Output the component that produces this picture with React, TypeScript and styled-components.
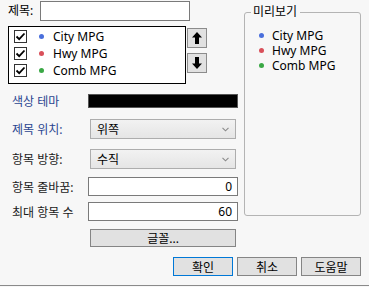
import React from 'react';
import styled, { createGlobalStyle } from 'styled-components';

const GlobalStyle = createGlobalStyle`
  body {
    margin: 0;
    background: #f7f7f7;
    font-family: 'Noto Sans', 'Noto Sans CJK KR', sans-serif;
    font-size: 12px;
    color: #000;
  }
`;

const SERIES = [
  { name: 'City MPG', color: '#4a6fdc' },
  { name: 'Hwy MPG', color: '#d9505a' },
  { name: 'Comb MPG', color: '#3aa845' },
];

function CheckMark() {
  return (
    <svg width="11" height="11" viewBox="0 0 11 11">
      <path d="M1.5 5.5 L4.2 8.2 L9.5 2.5" fill="none" stroke="#000" strokeWidth="1.8" />
    </svg>
  );
}

function Arrow({ down }: { down?: boolean }) {
  return (
    <svg width="10" height="12" viewBox="0 0 10 12" style={down ? { transform: 'rotate(180deg)' } : undefined}>
      <path d="M5 0 L10 5.5 L7 5.5 L7 12 L3 12 L3 5.5 L0 5.5 Z" fill="#000" />
    </svg>
  );
}

function Chevron() {
  return (
    <svg width="7" height="5" viewBox="0 0 7 5">
      <path d="M0.5 0.8 L3.5 3.8 L6.5 0.8" fill="none" stroke="#8a8a8a" strokeWidth="1.1" />
    </svg>
  );
}

function App() {
  return (
    <>
      <GlobalStyle />
      <S.Window>
        <S.Main>
          <S.LeftCol>
            <S.TitleRow>
              <S.TitleLabel>제목:</S.TitleLabel>
              <S.TitleInput />
            </S.TitleRow>

            <S.ListRow>
              <S.ListBox>
                {SERIES.map(s => (
                  <S.ListItem key={s.name}>
                    <S.Check>
                      <CheckMark />
                    </S.Check>
                    <S.Dot $color={s.color} $gap={9} />
                    {s.name}
                  </S.ListItem>
                ))}
              </S.ListBox>
              <S.MoveButtons>
                <S.MoveButton>
                  <Arrow />
                </S.MoveButton>
                <S.MoveButton>
                  <Arrow down />
                </S.MoveButton>
              </S.MoveButtons>
            </S.ListRow>

            <S.Field $mt={8}>
              <S.Label $blue>색상 테마</S.Label>
              <S.ColorBar />
            </S.Field>
            <S.Field $mt={9}>
              <S.Label $blue>제목 위치:</S.Label>
              <S.Combo>
                위쪽
                <Chevron />
              </S.Combo>
            </S.Field>
            <S.Field $mt={10}>
              <S.Label>항목 방향:</S.Label>
              <S.Combo>
                수직
                <Chevron />
              </S.Combo>
            </S.Field>
            <S.Field $mt={8}>
              <S.Label>항목 줄바꿈:</S.Label>
              <S.NumberBox>0</S.NumberBox>
            </S.Field>
            <S.Field $mt={6}>
              <S.Label>최대 항목 수</S.Label>
              <S.NumberBox>60</S.NumberBox>
            </S.Field>
            <S.Field $mt={8}>
              <S.Label />
              <S.FontButton>글꼴...</S.FontButton>
            </S.Field>
          </S.LeftCol>

          <S.GroupBox>
            <S.Legend>미리보기</S.Legend>
            {SERIES.map(s => (
              <S.PreviewItem key={s.name}>
                <S.Dot $color={s.color} $gap={8} />
                {s.name}
              </S.PreviewItem>
            ))}
          </S.GroupBox>
        </S.Main>

        <S.Footer>
          <S.DialogButton $focused>확인</S.DialogButton>
          <S.DialogButton>취소</S.DialogButton>
          <S.DialogButton>도움말</S.DialogButton>
        </S.Footer>
      </S.Window>
    </>
  );
}

const S = {
  Window: styled.div`
    width: 369px;
    height: 285px;
    border-bottom: 1px solid #8a8a8a;
    display: flex;
    flex-direction: column;
  `,
  Main: styled.div`
    display: flex;
    align-items: flex-start;
    padding-left: 8px;
    height: 243px;
  `,
  LeftCol: styled.div`
    width: 230px;
    display: flex;
    flex-direction: column;
  `,
  TitleRow: styled.div`
    display: flex;
    align-items: center;
    margin-top: 1px;
    height: 20px;
  `,
  TitleLabel: styled.div`
    width: 32px;
    line-height: 20px;
  `,
  TitleInput: styled.div`
    width: 150px;
    height: 20px;
    box-sizing: border-box;
    background: #fff;
    border: 1px solid #7a7a7a;
  `,
  ListRow: styled.div`
    display: flex;
    margin-top: 5px;
    gap: 1px;
  `,
  ListBox: styled.div`
    width: 178px;
    height: 58px;
    box-sizing: border-box;
    background: #fff;
    border: 1px solid #000;
    padding: 1px 0 0 5px;
  `,
  ListItem: styled.div`
    display: flex;
    align-items: center;
    height: 17px;
    line-height: 17px;
  `,
  Check: styled.div`
    width: 13px;
    height: 13px;
    box-sizing: border-box;
    border: 1px solid #333;
    background: #fff;
    display: flex;
    align-items: center;
    justify-content: center;
    margin-right: 12px;
  `,
  Dot: styled.span<{ $color: string; $gap: number }>`
    width: 5px;
    height: 5px;
    border-radius: 50%;
    background: ${p => p.$color};
    margin-right: ${p => p.$gap}px;
    flex-shrink: 0;
  `,
  MoveButtons: styled.div`
    display: flex;
    flex-direction: column;
    gap: 5px;
    padding-top: 2px;
  `,
  MoveButton: styled.div`
    width: 20px;
    height: 20px;
    box-sizing: border-box;
    background: #e1e1e1;
    border: 1px solid #8c8c8c;
    display: flex;
    align-items: center;
    justify-content: center;
  `,
  Field: styled.div<{ $mt: number }>`
    display: flex;
    align-items: center;
    margin-top: ${p => p.$mt}px;
  `,
  Label: styled.div<{ $blue?: boolean }>`
    width: 76px;
    padding-left: 4px;
    color: ${p => (p.$blue ? '#2a4590' : '#1a1a1a')};
    white-space: nowrap;
  `,
  ColorBar: styled.div`
    width: 150px;
    height: 14px;
    box-sizing: border-box;
    background: #000;
    border: 1px solid #555;
  `,
  Combo: styled.div`
    width: 146px;
    height: 20px;
    margin-left: 2px;
    box-sizing: border-box;
    background: linear-gradient(#f2f2f2, #e5e5e5);
    border: 1px solid #adadad;
    display: flex;
    align-items: center;
    justify-content: space-between;
    padding: 0 6px;
  `,
  NumberBox: styled.div`
    width: 150px;
    height: 19px;
    box-sizing: border-box;
    background: #fff;
    border: 1px solid #7a7a7a;
    text-align: right;
    padding-right: 5px;
    line-height: 17px;
  `,
  FontButton: styled.div`
    width: 146px;
    height: 18px;
    margin-left: 2px;
    box-sizing: border-box;
    background: #e1e1e1;
    border: 1px solid #858585;
    display: flex;
    align-items: center;
    justify-content: center;
  `,
  GroupBox: styled.div`
    position: relative;
    margin: 12px 0 0 6px;
    width: 117px;
    height: 204px;
    box-sizing: border-box;
    border: 1px solid #b4b4b4;
    border-radius: 3px;
    padding: 15px 0 0 14px;
  `,
  Legend: styled.div`
    position: absolute;
    top: -9px;
    left: 6px;
    padding: 0 3px 0 2px;
    background: #f7f7f7;
    line-height: 16px;
  `,
  PreviewItem: styled.div`
    display: flex;
    align-items: center;
    height: 15px;
    line-height: 15px;
  `,
  Footer: styled.div`
    display: flex;
    justify-content: flex-end;
    gap: 4px;
    padding-right: 8px;
    margin-top: 14px;
  `,
  DialogButton: styled.div<{ $focused?: boolean }>`
    width: 60px;
    height: 19px;
    box-sizing: border-box;
    background: #e1e1e1;
    border: 1px solid ${p => (p.$focused ? '#0078d7' : '#858585')};
    display: flex;
    align-items: center;
    justify-content: center;
  `,
};

export default App;
